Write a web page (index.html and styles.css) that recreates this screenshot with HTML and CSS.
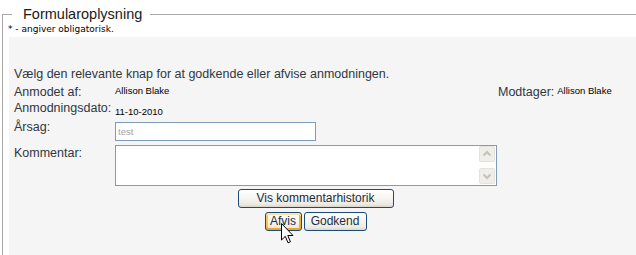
FILE: index.html
```html
<!DOCTYPE html>
<html lang="da">
<head>
<meta charset="utf-8">
<title>Formularoplysning</title>
<link rel="stylesheet" href="styles.css">
</head>
<body>
<fieldset class="group">
  <legend class="group-title">Formularoplysning</legend>
  <div class="req-note">* - angiver obligatorisk.</div>
  <div class="panel">
    <div class="form">
      <div class="intro">Vælg den relevante knap for at godkende eller afvise anmodningen.</div>
      <div class="row-meta">
        <span class="label">Anmodet af:</span>
        <span class="value">Allison Blake</span>
        <span class="label">Modtager:</span>
        <span class="value value-right">Allison Blake</span>
      </div>
      <div class="row row-date">
        <span class="label">Anmodningsdato:</span>
        <span class="value value-low">11-10-2010</span>
      </div>
      <div class="row row-reason">
        <span class="label">Årsag:</span>
        <input class="field" type="text" value="test">
      </div>
      <div class="row row-comment">
        <span class="label">Kommentar:</span>
        <div class="textarea-box">
          <textarea class="textarea"></textarea>
          <div class="sb">
            <span class="sb-btn"><svg width="14" height="14" viewBox="0 0 14 14"><path d="M3.5 8.5 L7 5 L10.5 8.5" fill="none" stroke="#c3c3bb" stroke-width="2"/></svg></span>
            <span class="sb-btn"><svg width="14" height="14" viewBox="0 0 14 14"><path d="M3.5 5.5 L7 9 L10.5 5.5" fill="none" stroke="#c3c3bb" stroke-width="2"/></svg></span>
          </div>
        </div>
      </div>
      <div class="actions actions-1">
        <button class="btn btn-history" type="button">Vis kommentarhistorik</button>
      </div>
      <div class="actions actions-2">
        <button class="btn btn-reject btn-hover" type="button">Afvis</button>
        <button class="btn btn-approve" type="button">Godkend</button>
      </div>
    </div>
  </div>
</fieldset>
<svg class="cursor" width="13" height="22" viewBox="0 0 13 22"><path d="M0.5 0.5 L0.5 17 L4.3 13.3 L7 19.8 L9.4 18.8 L6.8 12.5 L12 12.5 Z" fill="#fff" stroke="#000" stroke-width="1" stroke-linejoin="miter"/></svg>
</body>
</html>
```
FILE: styles.css
```css
html, body {
  margin: 0;
  padding: 0;
  background: #ffffff;
}
body {
  position: relative;
  width: 636px;
  height: 255px;
  overflow: hidden;
  font-family: "Liberation Sans", Arial, sans-serif;
}
.group {
  margin: 6px 0 0 2px;
  padding: 0 0 0 5px;
  border: 1px solid #a9a9a9;
  border-right: 0;
  border-bottom: 0;
  min-width: 0;
}
.group-title {
  margin-left: 4px;
  padding: 0 8px 0 11px;
  font-size: 14.5px;
  line-height: 17px;
  color: #1a1a1a;
}
.req-note {
  margin-top: 1px;
  font-family: "DejaVu Sans", Verdana, sans-serif;
  font-size: 9px;
  line-height: 11px;
  color: #000;
}
.panel {
  margin: 2px 0 0 1px;
  padding: 30px 0 0 5px;
  height: 200px;
  background: #f5f5f5;
}
.form {
  width: 603px;
}
.intro, .label {
  font-size: 12.5px;
  line-height: 14px;
  color: #2e3742;
}
.intro {
  height: 14px;
}
.label {
  display: block;
  width: 101px;
  flex: none;
  white-space: nowrap;
}
.value {
  font-size: 9.5px;
  line-height: 11px;
  color: #000;
}
.row-meta {
  margin-top: 4px;
  display: grid;
  grid-template-columns: 101px 383px max-content max-content;
  align-items: start;
}
.row-meta .label {
  width: auto;
}
.value-right {
  margin-left: 3px;
}
.row {
  display: flex;
  align-items: flex-start;
}
.row-date {
  margin-top: 2px;
}
.value-low {
  padding-top: 5px;
}
.row-reason {
  margin-top: 3px;
}
.field {
  margin: 2px 0 0 0;
  width: 201px;
  height: 19px;
  box-sizing: border-box;
  border: 1px solid #7f9db9;
  padding: 0 0 0 2px;
  font-family: "Liberation Sans", Arial, sans-serif;
  font-size: 9.5px;
  color: #a3a3a3;
  background: #fff;
  outline: none;
}
.row-comment {
  margin-top: 4px;
}
.row-comment .label {
  padding-top: 1px;
}
.textarea-box {
  display: flex;
  width: 382px;
  height: 41px;
  box-sizing: border-box;
  border: 1px solid #7f9db9;
  background: #fff;
}
.textarea {
  flex: 1;
  border: 0;
  margin: 0;
  padding: 0;
  resize: none;
  outline: none;
  overflow: hidden;
  background: #fff;
}
.sb {
  width: 17px;
  box-sizing: border-box;
  padding: 0 1px 1px 0;
  display: flex;
  flex-direction: column;
  justify-content: space-between;
  background: #fdfdfa;
}
.sb-btn {
  display: flex;
  align-items: center;
  justify-content: center;
  width: 16px;
  height: 16px;
  box-sizing: border-box;
  border: 1px solid #e4e3dc;
  border-radius: 2px;
  background: #efeee8;
}
.actions {
  display: flex;
  justify-content: center;
  gap: 2px;
}
.actions-1 {
  margin-top: 3px;
}
.actions-2 {
  margin-top: 4px;
}
.btn {
  height: 19px;
  box-sizing: border-box;
  padding: 0;
  margin: 0;
  border: 1px solid #1c4a7a;
  border-radius: 3px;
  background: linear-gradient(#ffffff 0%, #f7f6f2 45%, #ebe9e1 85%, #d8d5ca 100%);
  font-family: "Liberation Sans", Arial, sans-serif;
  font-size: 12px;
  line-height: 15px;
  color: #1f2c3a;
}
.btn-history {
  width: 156px;
}
.btn-reject {
  width: 37px;
}
.btn-approve {
  width: 63px;
}
.btn-hover {
  box-shadow: inset 0 2px 0 #ffe3a0, inset 0 -2px 0 #eda42a, inset 2px 0 0 #f9c15a, inset -2px 0 0 #f3ae38;
}
.cursor {
  position: absolute;
  left: 281px;
  top: 223px;
}
```
